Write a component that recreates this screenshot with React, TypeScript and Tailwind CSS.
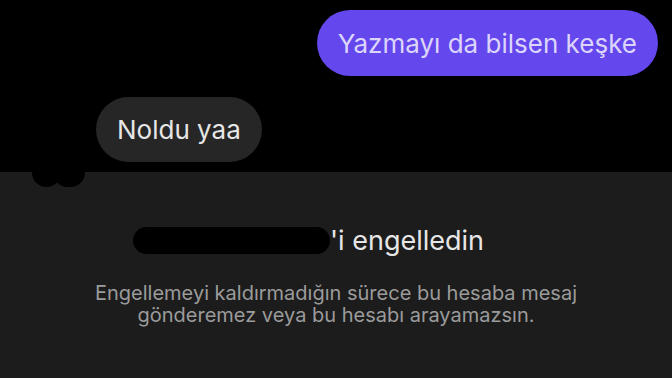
export default function App() {
  return (
    <div
      className="w-[672px] h-[378px] bg-black flex flex-col overflow-hidden"
      style={{ fontFamily: 'Inter, Roboto, "Noto Sans", sans-serif' }}
    >
      {/* Messages */}
      <div className="h-[172px] flex flex-col">
        <div className="flex justify-end pr-[14px] pt-[10px]">
          <div className="h-[66px] px-[21px] rounded-full bg-[#6547ee] flex items-center text-[26px] text-[#dcd5fb]">
            Yazmayı da bilsen keşke
          </div>
        </div>
        <div className="flex pl-[96px] pt-[21px]">
          <div className="h-[65px] px-[21px] rounded-full bg-[#262626] flex items-center text-[26px] text-[#e6e6e6]">
            Noldu yaa
          </div>
        </div>
      </div>

      {/* Blocked panel */}
      <div className="relative flex-1 bg-[#1c1c1c] flex flex-col">
        {/* avatar peeking from above */}
        <div className="absolute left-[32px] -top-[14px] flex">
          <div className="w-[29px] h-[29px] rounded-full bg-black" />
          <div className="w-[32px] h-[29px] rounded-full bg-black -ml-[8px]" />
        </div>

        <div className="flex items-center pl-[133px] pt-[55px] h-[82px]">
          <div className="w-[197px] h-[27px] rounded-full bg-black" />
          <span className="text-[27px] text-[#e6e6e6] leading-none">'i engelledin</span>
        </div>

        <div className="mt-[28px] text-center text-[20px] leading-[22px] text-[#9b9b9b]">
          <div>Engellemeyi kaldırmadığın sürece bu hesaba mesaj</div>
          <div>gönderemez veya bu hesabı arayamazsın.</div>
        </div>
      </div>
    </div>
  );
}
